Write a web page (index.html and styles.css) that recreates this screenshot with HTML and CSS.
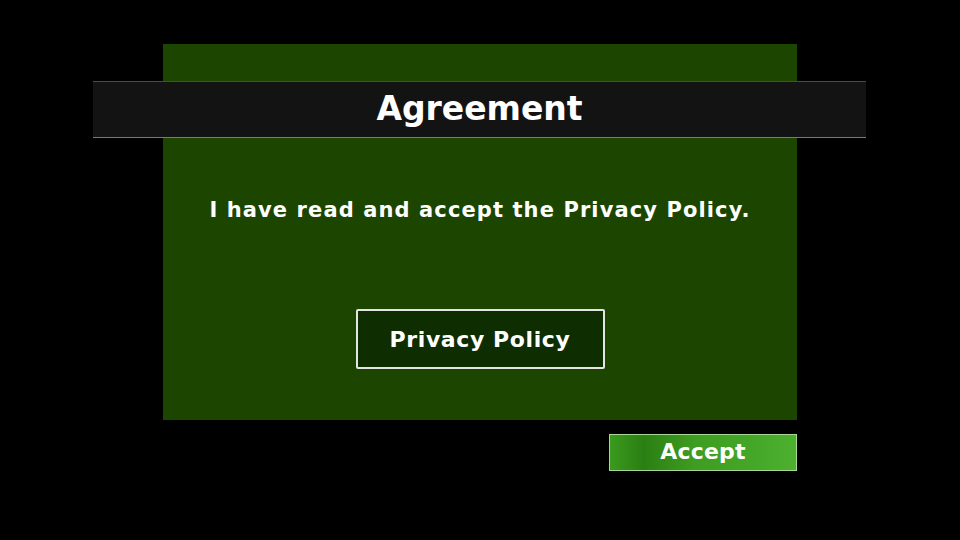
FILE: index.html
```html
<!DOCTYPE html>
<html lang="en">
<head>
<meta charset="utf-8">
<title>Agreement</title>
<link rel="stylesheet" href="styles.css">
</head>
<body>
<div class="stage">
  <div class="panel">
    <div class="titlebar"><h1 class="title">Agreement</h1></div>
    <p class="message">I have read and accept the Privacy Policy.</p>
    <button class="policy-btn" type="button">Privacy Policy</button>
  </div>
  <div class="actions">
    <button class="accept-btn" type="button">Accept</button>
  </div>
</div>
</body>
</html>
```
FILE: styles.css
```css
html, body {
  margin: 0;
  padding: 0;
  background: #000;
  width: 960px;
  height: 540px;
  overflow: hidden;
  font-family: "DejaVu Sans", "Open Sans", sans-serif;
  color: #fff;
}
.stage {
  padding: 44px 0 0 163px;
  width: 634px;
}
.panel {
  height: 376px;
  box-sizing: border-box;
  background: #1c4600;
  padding-top: 37px;
  display: flex;
  flex-direction: column;
  align-items: center;
}
.titlebar {
  align-self: stretch;
  margin: 0 -69px 0 -70px;
  height: 57px;
  box-sizing: border-box;
  background: #131313;
  border-top: 1px solid #4a4a4a;
  border-bottom: 1px solid #7a7a7a;
  display: flex;
  align-items: center;
  justify-content: center;
}
.title {
  margin: 0;
  font-size: 33px;
  font-weight: 700;
  letter-spacing: 0;
  line-height: 36px;
  padding-bottom: 2px;
}
.message {
  margin: 58px 0 0;
  font-size: 21px;
  font-weight: 700;
  line-height: 28px;
  letter-spacing: 1.1px;
}
.policy-btn {
  margin-top: 85px;
  width: 249px;
  height: 60px;
  box-sizing: border-box;
  background: #0e2d00;
  border: 2px solid #e4e4e4;
  border-radius: 2px;
  color: #fff;
  font-family: inherit;
  font-size: 22px;
  font-weight: 700;
  letter-spacing: 0.6px;
  padding: 0;
}
.actions {
  display: flex;
  justify-content: flex-end;
  margin-top: 14px;
}
.accept-btn {
  width: 188px;
  height: 37px;
  box-sizing: border-box;
  background: linear-gradient(90deg, #3a9a1e 0%, #2a7f12 18%, #3e9c22 45%, #45a828 80%, #4db02f 100%);
  border: 1px solid #a9d795;
  color: #fff;
  font-family: inherit;
  font-size: 22px;
  font-weight: 700;
  letter-spacing: 0.2px;
  padding: 0 0 2px;
}
```
